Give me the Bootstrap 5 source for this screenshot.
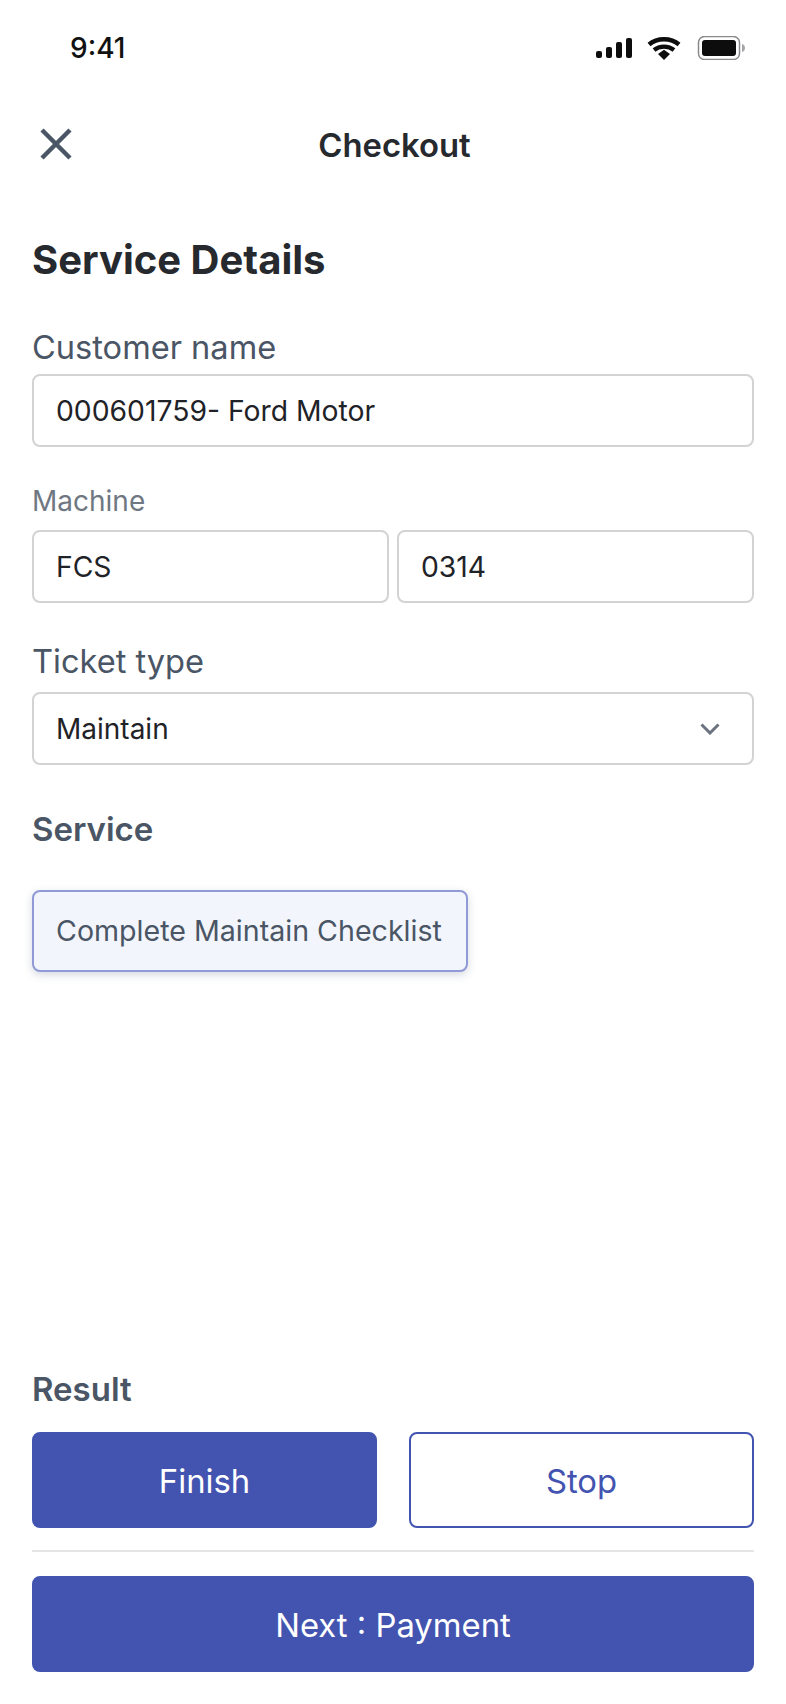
<!DOCTYPE html>
<html lang="en">
<head>
  <meta charset="UTF-8">
  <title>Checkout</title>
  <link href="https://cdn.jsdelivr.net/npm/bootstrap@5.3.0/dist/css/bootstrap.min.css" rel="stylesheet">
  <style>
    body {
      background-color: #fff;
      font-family: Inter, "Liberation Sans", sans-serif;
      color: #26292e;
    }
    .screen {
      height: 1704px;
      padding: 0 32px 32px 32px;
    }
    .status-bar {
      height: 96px;
      padding: 0 7px 0 38px;
    }
    .status-time {
      font-size: 28px;
      font-weight: 500;
      color: #111;
    }
    .top-bar {
      height: 98px;
      padding: 2px 0 0 3px;
    }
    .close-btn {
      left: 8px;
      top: 32px;
      width: 32px;
      height: 32px;
    }
    .top-title {
      font-size: 32.8px;
      font-weight: 600;
    }
    .page-title {
      font-size: 40px;
      font-weight: 700;
      line-height: 48px;
      margin: 42px 0 44px;
    }
    .field-label {
      font-size: 32.6px;
      line-height: 38px;
      color: #4a5565;
      margin-bottom: 8px;
    }
    .field-label-muted {
      font-size: 28px;
      line-height: 40px;
      color: #6f7782;
      margin-bottom: 9px;
    }
    .field-label-bold {
      font-size: 33px;
      line-height: 38px;
      font-weight: 600;
      color: #4a5565;
    }
    .form-control, .form-select {
      height: 73px;
      padding: 0 22px;
      border: 2px solid #d3d3d3;
      border-radius: 8px;
      font-size: 28.3px;
      color: #1f2328;
    }
    .form-select {
      font-size: 28px;
      background-image: url("data:image/svg+xml,%3csvg xmlns='http://www.w3.org/2000/svg' viewBox='0 0 20 12'%3e%3cpath fill='none' stroke='%236b7280' stroke-width='3' d='M1.5 1.5 10 10l8.5-8.5'/%3e%3c/svg%3e");
      background-position: right 32px center;
      background-size: 20px 12px;
    }
    .gap-after-input { margin-bottom: 34px; }
    .gap-after-row { margin-bottom: 39px; }
    .gap-after-select { margin-bottom: 45px; }
    .label-ticket { margin-bottom: 12px; }
    .label-service { margin-bottom: 42px; }
    .label-result { margin-bottom: 24px; }
    .service-chip {
      height: 82px;
      padding: 0 24px 0 22px;
      background: #f2f5fb;
      border: 2px solid #8f9ad6;
      border-radius: 8px;
      box-shadow: 0 3px 8px rgba(70, 80, 120, .22);
      font-size: 28.6px;
      color: #4a5565;
    }
    .btn-main, .btn-line {
      height: 96px;
      padding: 4px 12px 0;
      border-radius: 8px;
      font-size: 32.8px;
      display: flex;
      align-items: center;
      justify-content: center;
    }
    .btn-main {
      background: #4254af;
      border: 2px solid #4254af;
      color: #fff;
    }
    .btn-line {
      background: #fff;
      border: 2px solid #4254af;
      color: #4254af;
    }
    .rule-line {
      height: 2px;
      background: #e5e5e5;
      margin: 22px 0 24px;
    }
    .result-row {
      gap: 32px;
    }
  </style>
</head>
<body>
  <div class="screen d-flex flex-column">
    <!-- barra de status -->
    <div class="status-bar d-flex align-items-center justify-content-between">
      <span class="status-time">9:41</span>
      <svg width="152" height="24" viewBox="0 0 152 24" aria-hidden="true">
        <rect x="1" y="15" width="6" height="7" rx="2" fill="#0d0d0d"/>
        <rect x="11" y="11" width="6" height="11" rx="2" fill="#0d0d0d"/>
        <rect x="21" y="6" width="6" height="16" rx="2" fill="#0d0d0d"/>
        <rect x="31" y="2" width="6" height="20" rx="2" fill="#0d0d0d"/>
        <path d="M54 8.5 C62 1.5 76 1.5 84 8.5" fill="none" stroke="#0d0d0d" stroke-width="4.4"/>
        <path d="M59 14 C64.5 9.5 73.5 9.5 79 14" fill="none" stroke="#0d0d0d" stroke-width="4.2"/>
        <path d="M63 18 L69 13.8 L75 18 L69 24 Z" fill="#0d0d0d"/>
        <rect x="103.5" y="0.5" width="41" height="23" rx="6" fill="#fff" stroke="#8a8a8e" stroke-width="1.5"/>
        <rect x="107" y="4" width="34" height="16" rx="3" fill="#0d0d0d"/>
        <path d="M147 8 C149.5 9 150 10.5 150 12 C150 13.5 149.5 15 147 16 Z" fill="#a5a5a9"/>
      </svg>
    </div>

    <!-- topo -->
    <div class="top-bar position-relative d-flex justify-content-center align-items-center">
      <svg class="close-btn position-absolute" viewBox="0 0 32 32" aria-hidden="true">
        <path d="M2 2 L30 30 M30 2 L2 30" stroke="#4a5565" stroke-width="4.5" fill="none"/>
      </svg>
      <span class="top-title">Checkout</span>
    </div>

    <h1 class="page-title">Service Details</h1>

    <label class="field-label">Customer name</label>
    <input type="text" class="form-control gap-after-input" value="000601759- Ford Motor">

    <label class="field-label-muted">Machine</label>
    <div class="d-flex gap-2 gap-after-row">
      <input type="text" class="form-control" value="FCS">
      <input type="text" class="form-control" value="0314">
    </div>

    <label class="field-label label-ticket">Ticket type</label>
    <select class="form-select gap-after-select">
      <option>Maintain</option>
    </select>

    <div class="field-label-bold label-service">Service</div>
    <div class="d-flex">
      <div class="service-chip d-flex align-items-center">Complete Maintain Checklist</div>
    </div>

    <!-- resultado -->
    <div class="field-label-bold mt-auto label-result">Result</div>
    <div class="d-flex result-row">
      <a class="btn btn-main flex-fill w-50">Finish</a>
      <a class="btn btn-line flex-fill w-50">Stop</a>
    </div>
    <div class="rule-line"></div>
    <a class="btn btn-main w-100">Next : Payment</a>
  </div>
  <script src="https://cdn.jsdelivr.net/npm/bootstrap@5.3.0/dist/js/bootstrap.bundle.min.js"></script>
</body>
</html>
